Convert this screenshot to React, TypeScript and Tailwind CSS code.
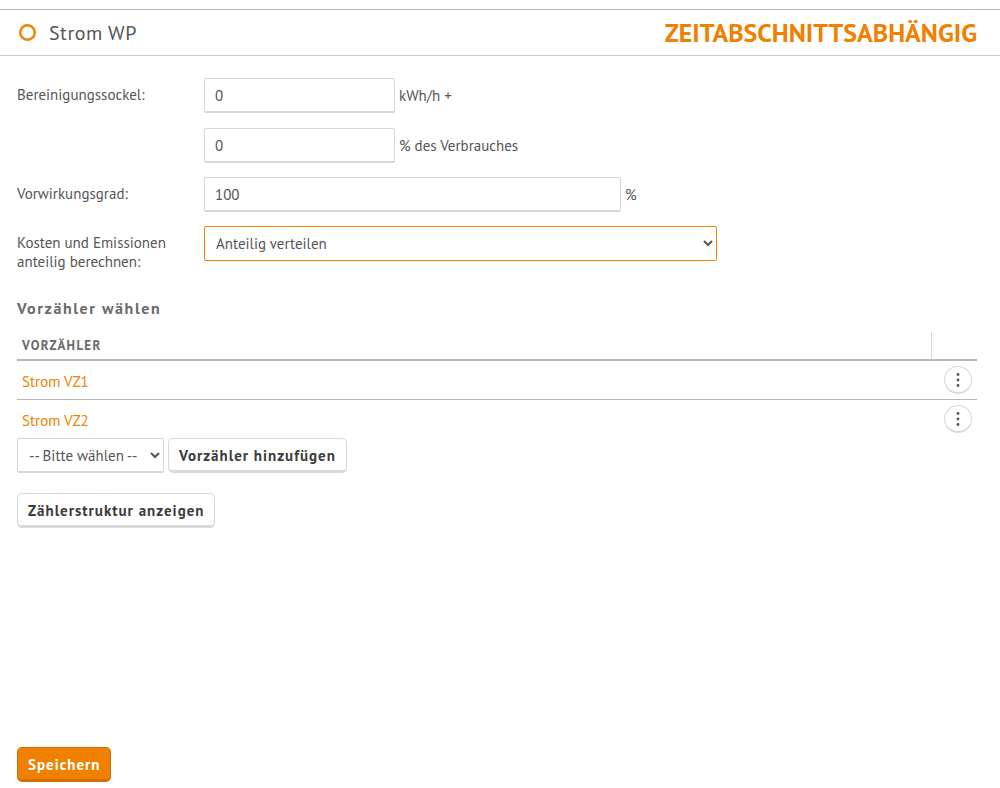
import type { ReactNode } from 'react';

const field =
  'h-[35px] rounded-xs border border-b-2 border-[#d6d6d6] bg-white px-2.5 text-[15px] text-[#555555] outline-none';

const button =
  'h-[35px] rounded-[5px] border border-b-[3px] px-2.5 pt-[3px] text-[15px] font-bold tracking-[1px]';

const secondaryButton = `${button} border-[#d9d9d9] bg-white text-[#3c3c3c]`;

const unit = 'pt-0.5';

function Row({ label, htmlFor, children }: { label: string; htmlFor: string; children: ReactNode }) {
  return (
    <div className="flex items-start">
      <label htmlFor={htmlFor} className="w-[187px] shrink-0 pt-[7px] pr-4 leading-[19px]">
        {label}
      </label>
      <div className="min-w-0 flex-1">{children}</div>
    </div>
  );
}

function MeterRow({ name }: { name: string }) {
  return (
    <tr className="h-[39px] border-b border-[#b9b9b9] last:border-b-0">
      <td className="px-[5px] pt-1">
        <a href="#" className="text-[#f08000]">
          {name}
        </a>
      </td>
      <td className="pr-[5px]">
        <button
          type="button"
          aria-label={`Aktionen für ${name}`}
          className="ml-auto flex size-7 items-center justify-center rounded-full border border-b-2 border-[#d9d9d9] bg-white pt-px"
        >
          <svg viewBox="0 0 4 16" className="h-4 w-1" fill="#555555">
            <circle cx="2" cy="2.5" r="1.4" />
            <circle cx="2" cy="8" r="1.4" />
            <circle cx="2" cy="13.5" r="1.4" />
          </svg>
        </button>
      </td>
    </tr>
  );
}

export default function App() {
  return (
    <div className="flex min-h-screen flex-col bg-white pt-[9px] font-['PT_Sans',Lato,sans-serif] text-[15px] text-[#555555]">
      <header className="flex h-[47px] items-center justify-between border-y border-t-[#b9b9b9] border-b-[#c9c9c9] pr-[23px] pl-[18px]">
        <div className="flex items-center gap-3">
          <svg viewBox="0 0 19 19" className="size-[19px]" fill="none" stroke="#f08000" strokeWidth="2.4">
            <circle cx="9.5" cy="9.5" r="7.3" />
          </svg>
          <h1 className="text-[20px] tracking-wide">Strom WP</h1>
        </div>
        <strong className="text-[26px] text-[#f08000]">ZEITABSCHNITTSABHÄNGIG</strong>
      </header>

      <form className="flex flex-1 flex-col pt-[22px] pr-[23px] pb-1.5 pl-[17px]" onSubmit={(e) => e.preventDefault()}>
        <div className="flex flex-col gap-[14px]">
          <Row label="Bereinigungssockel:" htmlFor="sockel">
            <div className="flex flex-col gap-[15px]">
              <div className="flex items-center gap-1">
                <input id="sockel" defaultValue="0" className={`${field} w-[191px]`} />
                <span className={unit}>kWh/h +</span>
              </div>
              <div className="flex items-center gap-1">
                <input id="anteil" defaultValue="0" className={`${field} w-[191px]`} />
                <label htmlFor="anteil" className={unit}>
                  % des Verbrauches
                </label>
              </div>
            </div>
          </Row>
          <Row label="Vorwirkungsgrad:" htmlFor="wirkungsgrad">
            <div className="flex items-center gap-1">
              <input id="wirkungsgrad" defaultValue="100" className={`${field} w-[417px]`} />
              <span className={unit}>%</span>
            </div>
          </Row>
          <Row label="Kosten und Emissionen anteilig berechnen:" htmlFor="kosten">
            <select
              id="kosten"
              className="h-[35px] w-[513px] max-w-full rounded-xs border border-[#f08000] bg-white pr-2 pl-[7px] text-[15px] text-[#555555] outline-none"
            >
              <option>Anteilig verteilen</option>
            </select>
          </Row>
        </div>

        <h2 className="mt-[27px] text-base leading-5 font-bold tracking-widest text-[#6b6b6b]">Vorzähler wählen</h2>

        <table className="mt-[14px] w-full border-collapse">
          <thead>
            <tr className="h-7 border-b-2 border-[#b9b9b9]">
              <th className="border-r border-[#d9d9d9] px-[5px] text-left text-[13px] font-bold tracking-widest text-[#6b6b6b]">
                VORZÄHLER
              </th>
              <th className="w-[46px]" aria-label="Aktionen" />
            </tr>
          </thead>
          <tbody>
            <MeterRow name="Strom VZ1" />
            <MeterRow name="Strom VZ2" />
          </tbody>
        </table>

        <div className="flex gap-1">
          <select
            aria-label="Vorzähler"
            className="h-[35px] w-[147px] rounded-xs border border-b-2 border-[#d6d6d6] bg-white pr-2 pl-[7px] text-[15px] text-[#555555]"
          >
            <option>-- Bitte wählen --</option>
          </select>
          <button type="button" className={secondaryButton}>
            Vorzähler hinzufügen
          </button>
        </div>

        <div className="mt-5">
          <button type="button" className={secondaryButton}>
            Zählerstruktur anzeigen
          </button>
        </div>

        <div className="mt-auto pt-5">
          <button type="submit" className={`${button} border-[#d27000] bg-[#f08000] text-white`}>
            Speichern
          </button>
        </div>
      </form>
    </div>
  );
}
